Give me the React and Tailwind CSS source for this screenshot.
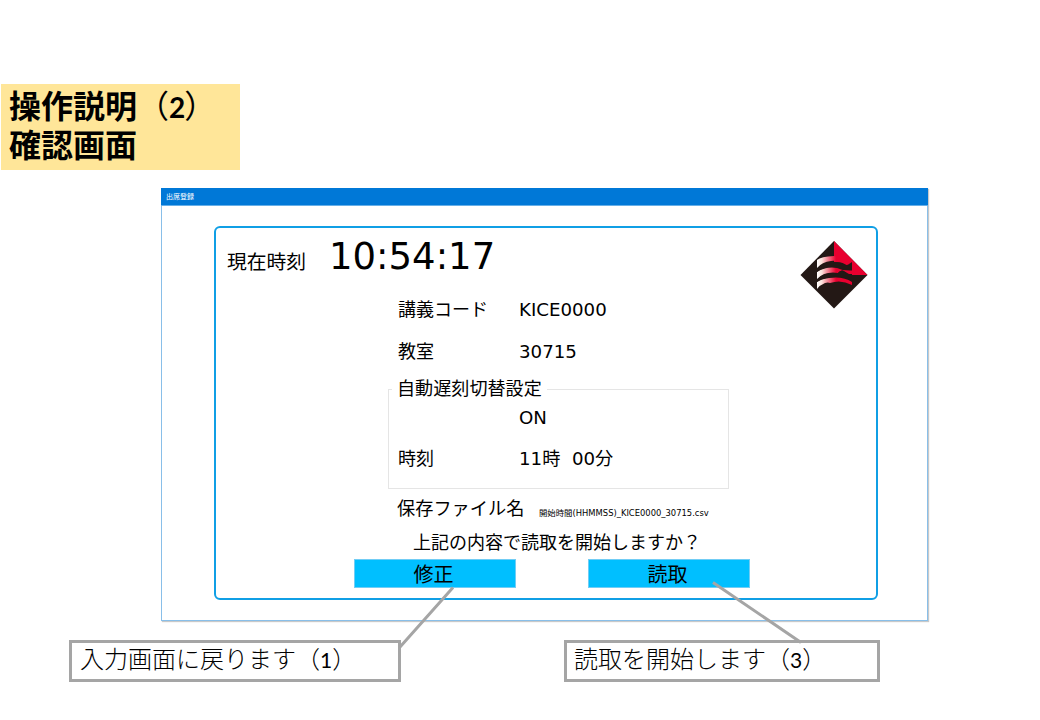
const ui = "font-['DejaVu_Sans','Noto_Sans_CJK_JP',sans-serif]";
const slide = "font-[Lato,'Noto_Sans_CJK_JP',sans-serif]";

function Logo() {
  return (
    <svg className="mt-[12px] mr-[7px] ml-auto block h-[70px] w-[70px] shrink-0" viewBox="0 0 70 70">
      <defs>
        <linearGradient id="band" gradientUnits="userSpaceOnUse" x1="18" y1="0" x2="37" y2="0">
          <stop offset="0" stopColor="#fff" />
          <stop offset="0.25" stopColor="#fbe3dc" />
          <stop offset="1" stopColor="#e8002f" />
        </linearGradient>
      </defs>
      <path d="M35 1L68.500 35L35 68.500L1.500 35Z" fill="#231815" />
      <path d="M35 1L68.500 35H53V23L35 22Z" fill="#e8002f" />
      <path d="M18 20Q22 16.500 35 16L53 20V24L49 26Q40 20 32 21Q23 22 18 28Z" fill="url(#band)" />
      <path d="M18 32Q24 27 34 27Q43 27 48 30L53 29V35H49Q46 31 43 30.500Q40 31 39 33Q26 31 18 39Z" fill="url(#band)" />
      <path d="M18 42Q22 39 30 38Q44 36 53 42V45Q42 39 31 43Q29 42 26 43Q21 45 18 49Z" fill="url(#band)" />
      <path d="M18 29Q23 23 32 22Q40 21.500 44 24Q48 26 50 24L53 22V30.500Q44 31 38 28Q27 26 18 32Z" fill="#231815" />
      <path d="M18 40Q23 33.500 32 33H39Q41 30 44 30.500L50 34H53V41Q47 37 37 37Q25 37 18 42Z" fill="#231815" />
    </svg>
  );
}

function Row({ label, value, className }) {
  return (
    <div className={`flex h-[28px] items-center text-[18px] leading-[28px] ${className}`}>
      <span className="w-[121px] shrink-0">{label}</span>
      <span className="text-[18.200px] whitespace-pre">{value}</span>
    </div>
  );
}

function Action({ children }) {
  return (
    <button className="flex h-[29px] w-[162px] items-center justify-center border border-[#71cdf5] bg-[#00bfff] pt-[3px] pr-[3px] text-[20px] leading-[28px]">
      {children}
    </button>
  );
}

export default function App() {
  return (
    <main className="relative flex h-[720px] w-[1040px] flex-col overflow-hidden bg-white pt-[84px] text-black">
      <h1 className={`ml-px h-[86px] w-[239px] shrink-0 bg-[#ffe699] pt-[3px] pl-[8px] text-[32px] leading-[38px] font-bold whitespace-nowrap ${slide}`}>
        操作説明<span className="font-normal">（</span><span className="text-[28px]">2</span><span className="-ml-px font-normal">）</span>
        <br />
        確認画面
      </h1>

      <section className={`mt-[18px] ml-[161px] flex h-[433px] w-[767px] shrink-0 flex-col border border-[#89bfe9] shadow-[1px_1px_1px_#c9c9c9] ${ui}`}>
        <header className="-mx-px -mt-px h-[18px] shrink-0 border-b border-[#66afe8] bg-[#0078d7] pl-[5px] text-[7px] leading-[18px] text-white">
          出席登録
        </header>
        <div className="mt-[20px] ml-[52px] flex h-[374px] w-[664px] flex-col rounded-[6px] border-2 border-[#109fe5]">
          <div className="flex h-[68px] shrink-0">
            <span className="mt-[20px] ml-[11px] w-[102px] shrink-0 text-[19.800px] leading-[30px]">現在時刻</span>
            <span className="mt-[7px] text-[37px] leading-[44px]">10:54:17</span>
            <Logo />
          </div>
          <Row className="ml-[182px]" label="講義コード" value="KICE0000" />
          <Row className="mt-[14px] ml-[182px]" label="教室" value="30715" />
          <div className="mt-[23px] ml-[172px] h-[100px] w-[341px] shrink-0 border border-[#e5e5e5]">
            <div className="-mt-[14px] ml-[3px] h-[26px] w-[155px] bg-white pl-[5px] text-[18.100px] leading-[26px] whitespace-nowrap">
              自動遅刻切替設定
            </div>
            <Row className="mt-[2px] ml-[9px]" label="" value="ON" />
            <Row className="mt-[13px] ml-[9px]" label="時刻" value="11時  00分" />
          </div>
          <div className="mt-[6px] ml-[181px] flex h-[28px] shrink-0 items-center whitespace-nowrap">
            <span className="w-[142px] text-[18.200px] leading-[28px]">保存ファイル名</span>
            <span className="pt-[7px] text-[8.400px] leading-[12px]">開始時間(HHMMSS)_KICE0000_30715.csv</span>
          </div>
          <p className="mt-[6px] ml-[197px] h-[28px] shrink-0 text-[18px] leading-[28px] whitespace-nowrap">
            上記の内容で読取を開始しますか？
          </p>
          <div className="mt-[2px] ml-[138px] flex gap-[72px]">
            <Action>修正</Action>
            <Action>読取</Action>
          </div>
        </div>
      </section>

      <div className={`mt-[19px] ml-[69px] flex shrink-0 gap-[163px] text-[24px] leading-[32px] font-light whitespace-nowrap ${slide}`}>
        <div className="h-[42px] w-[332px] border-[3px] border-[#a5a5a5] bg-white pl-[8px]">
          入力画面に戻ります（<span className="text-[21px] font-normal">1</span>）
        </div>
        <div className="h-[42px] w-[316px] border-[3px] border-[#a5a5a5] bg-white pl-[7px]">
          読取を開始します（<span className="text-[21px] font-normal">3</span>）
        </div>
      </div>

      <svg className="pointer-events-none absolute inset-0 h-[720px] w-[1040px]" viewBox="0 0 1040 720" stroke="#a5a5a5" strokeWidth="3">
        <path d="M400 647L453 587.500M713 582.500L801 642.500" />
      </svg>
    </main>
  );
}
